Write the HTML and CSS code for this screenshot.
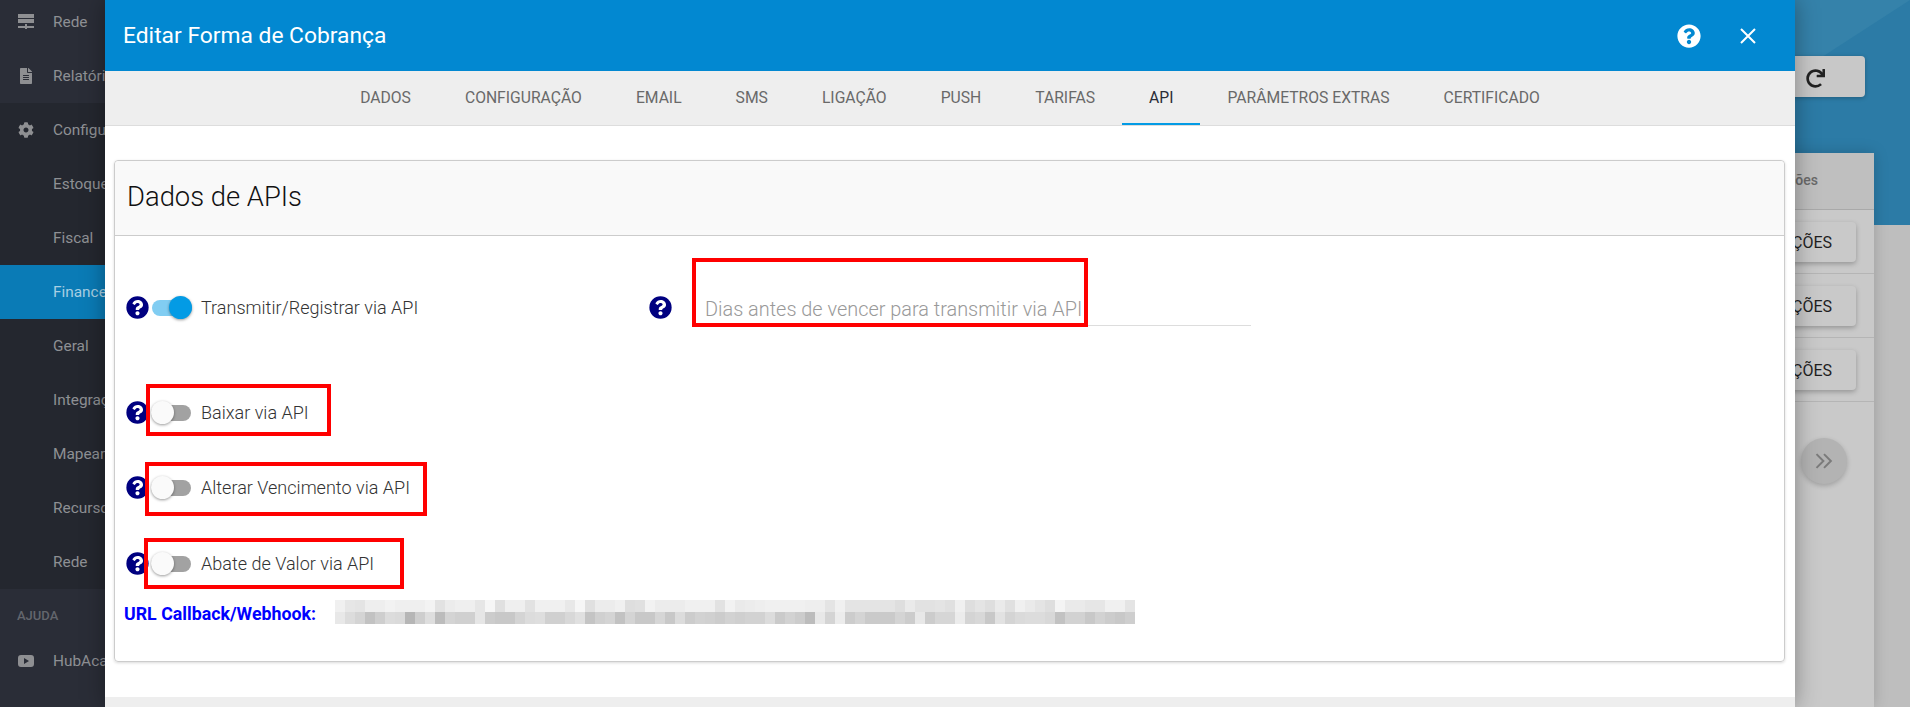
FILE: index.html
```html
<!DOCTYPE html>
<html lang="pt-BR">
<head>
  <meta charset="UTF-8" />
  <title>Editar Forma de Cobrança</title>
  <link rel="stylesheet" href="styles.css">
</head>
<body>
  <div class="app">
    <!-- Menu lateral (fica atras do modal) -->
    <nav class="lateral">
      <div class="grupo-topo">
        <a class="item">
          <svg class="icone" viewBox="0 0 16 16"><path d="M0 0h16v4H0zM0 5h16v4H0zM7 10h2v2h7v2H9v1H7v-1H0v-2h7z"/></svg>
          Rede
        </a>
        <a class="item">
          <svg class="icone" viewBox="0 0 384 512"><path d="M224 136V0H24C10.7 0 0 10.7 0 24v464c0 13.3 10.7 24 24 24h336c13.3 0 24-10.7 24-24V160H248c-13.2 0-24-10.8-24-24zm64 236c0 6.6-5.4 12-12 12H108c-6.6 0-12-5.4-12-12v-8c0-6.6 5.4-12 12-12h168c6.6 0 12 5.4 12 12v8zm0-64c0 6.6-5.4 12-12 12H108c-6.6 0-12-5.4-12-12v-8c0-6.6 5.4-12 12-12h168c6.6 0 12 5.4 12 12v8zm0-72v8c0 6.6-5.4 12-12 12H108c-6.6 0-12-5.4-12-12v-8c0-6.6 5.4-12 12-12h168c6.6 0 12 5.4 12 12zm96-114.1v6.1H256V0h6.1c6.4 0 12.5 2.5 17 7l97.9 98c4.5 4.5 7 10.6 7 16.9z"/></svg>
          Relatórios
        </a>
      </div>
      <a class="item">
        <svg class="icone" viewBox="0 0 512 512"><path d="M487.4 315.7l-42.6-24.6c4.3-23.2 4.3-47 0-70.2l42.6-24.6c4.9-2.8 7.1-8.6 5.5-14-11.1-35.6-30-67.8-54.7-94.6-3.8-4.1-10-5.1-14.8-2.3L380.8 110c-17.9-15.4-38.5-27.3-60.8-35.1V25.8c0-5.6-3.9-10.5-9.4-11.7-36.7-8.2-74.3-7.8-109.2 0-5.5 1.2-9.4 6.1-9.4 11.7V75c-22.2 7.9-42.8 19.8-60.8 35.1L88.7 85.5c-4.9-2.8-11-1.9-14.8 2.3-24.7 26.7-43.6 58.9-54.7 94.6-1.7 5.4.6 11.2 5.5 14L67.3 221c-4.3 23.2-4.3 47 0 70.2l-42.6 24.6c-4.9 2.8-7.1 8.6-5.5 14 11.1 35.6 30 67.8 54.7 94.6 3.8 4.1 10 5.1 14.8 2.3l42.6-24.6c17.9 15.4 38.5 27.3 60.8 35.1v49.2c0 5.6 3.9 10.5 9.4 11.7 36.7 8.2 74.3 7.8 109.2 0 5.5-1.2 9.4-6.1 9.4-11.7v-49.2c22.2-7.9 42.8-19.8 60.8-35.1l42.6 24.6c4.9 2.8 11 1.9 14.8-2.3 24.7-26.7 43.6-58.9 54.7-94.6 1.5-5.5-.7-11.3-5.6-14.1zM256 336c-44.1 0-80-35.9-80-80s35.9-80 80-80 80 35.9 80 80-35.9 80-80 80z"/></svg>
        Configurações
      </a>
      <a class="item sub">Estoque</a>
      <a class="item sub">Fiscal</a>
      <a class="item sub ativo">Financeiro</a>
      <a class="item sub">Geral</a>
      <a class="item sub">Integrações</a>
      <a class="item sub">Mapeamento</a>
      <a class="item sub">Recursos</a>
      <a class="item sub">Rede</a>
      <div class="grupo-ajuda">
        <div class="titulo-ajuda">AJUDA</div>
        <a class="item item-ajuda">
          <svg class="icone" viewBox="0 0 16 16"><path fill-rule="evenodd" d="M3 2h10a3 3 0 0 1 3 3v6a3 3 0 0 1-3 3H3a3 3 0 0 1-3-3V5a3 3 0 0 1 3-3zm3 3v6l5-3z"/></svg>
          HubAcademy
        </a>
      </div>
    </nav>

    <!-- Tela de fundo -->
    <main class="conteudo">
      <div class="barra-acoes">
        <button class="btn-atualizar">
          <svg viewBox="0 0 512 512"><path d="M500.33 0h-47.41a12 12 0 0 0-12 12.57l4 82.76A247.42 247.42 0 0 0 256 8C119.34 8 7.9 119.53 8 256.19 8.1 393.07 119.1 504 256 504a247.1 247.1 0 0 0 166.18-63.91 12 12 0 0 0 .48-17.43l-34-34a12 12 0 0 0-16.38-.55A176 176 0 1 1 402.1 157.8l-101.53-4.87a12 12 0 0 0-12.57 12v47.41a12 12 0 0 0 12 12h200.33a12 12 0 0 0 12-12V12a12 12 0 0 0-12-12z"/></svg>
        </button>
      </div>
      <section class="painel">
        <div class="painel-topo">Opções</div>
        <div class="painel-linha"><button class="btn-opcoes">OPÇÕES</button></div>
        <div class="painel-linha"><button class="btn-opcoes">OPÇÕES</button></div>
        <div class="painel-linha"><button class="btn-opcoes">OPÇÕES</button></div>
        <button class="btn-circulo">
          <svg viewBox="0 0 16 16"><path d="M2 2.5 7.5 8 2 13.5M8 2.5 13.5 8 8 13.5"/></svg>
        </button>
      </section>
    </main>
  </div>

  <!-- Modal -->
  <div class="modal">
    <header class="modal-topo">
      <h1>Editar Forma de Cobrança</h1>
      <svg class="modal-ajuda" viewBox="0 0 512 512"><path d="M504 256c0 136.997-111.043 248-248 248S8 392.997 8 256C8 119.083 119.043 8 256 8s248 111.083 248 248zM262.655 90c-54.497 0-89.255 22.957-116.549 63.758-3.536 5.286-2.353 12.415 2.715 16.258l34.699 26.31c5.205 3.947 12.621 3.008 16.665-2.122 17.864-22.658 30.113-35.797 57.303-35.797 20.429 0 45.698 13.148 45.698 32.958 0 14.976-12.363 22.667-32.534 33.976C247.128 238.528 216 254.941 216 296v4c0 6.627 5.373 12 12 12h56c6.627 0 12-5.373 12-12v-1.333c0-28.462 83.186-29.647 83.186-106.667 0-58.002-60.165-102-116.531-102zM256 338c-25.365 0-46 20.635-46 46 0 25.364 20.635 46 46 46s46-20.636 46-46c0-25.365-20.635-46-46-46z"/></svg>
      <svg class="modal-fechar" viewBox="0 0 16 16"><path d="M1 1l14 14M15 1 1 15"/></svg>
    </header>

    <div class="abas">
      <a class="aba">DADOS</a>
      <a class="aba">CONFIGURAÇÃO</a>
      <a class="aba">EMAIL</a>
      <a class="aba">SMS</a>
      <a class="aba">LIGAÇÃO</a>
      <a class="aba">PUSH</a>
      <a class="aba">TARIFAS</a>
      <a class="aba aba-ativa">API</a>
      <a class="aba">PARÂMETROS EXTRAS</a>
      <a class="aba">CERTIFICADO</a>
    </div>

    <div class="modal-corpo">
      <div class="cartao">
        <h2 class="cartao-topo">Dados de APIs</h2>
        <div class="cartao-corpo">
          <div class="linha linha-primeira">
            <div class="coluna-esq">
              <svg class="ajuda" viewBox="0 0 512 512"><use href="#interrogacao"/></svg>
              <span class="chave ligada"></span>
              <span class="rotulo">Transmitir/Registrar via API</span>
            </div>
            <svg class="ajuda" viewBox="0 0 512 512"><use href="#interrogacao"/></svg>
            <input class="campo" type="text" placeholder="Dias antes de vencer para transmitir via API">
          </div>
          <div class="linha linha-segunda">
            <svg class="ajuda" viewBox="0 0 512 512"><use href="#interrogacao"/></svg>
            <span class="chave"></span>
            <span class="rotulo">Baixar via API</span>
          </div>
          <div class="linha">
            <svg class="ajuda" viewBox="0 0 512 512"><use href="#interrogacao"/></svg>
            <span class="chave"></span>
            <span class="rotulo">Alterar Vencimento via API</span>
          </div>
          <div class="linha linha-abate">
            <svg class="ajuda" viewBox="0 0 512 512"><use href="#interrogacao"/></svg>
            <span class="chave"></span>
            <span class="rotulo">Abate de Valor via API</span>
          </div>
          <div class="linha-url">
            <strong class="url-titulo">URL Callback/Webhook:</strong>
            <div class="borrao" id="borrao"></div>
          </div>
        </div>
      </div>
    </div>
    <div class="modal-rodape"></div>

    <!-- Marcacoes vermelhas do print -->
    <div class="marca marca-campo"></div>
    <div class="marca marca-baixar"></div>
    <div class="marca marca-alterar"></div>
    <div class="marca marca-abate"></div>
  </div>

  <svg class="defs" width="0" height="0">
    <defs>
      <g id="interrogacao">
        <circle cx="256" cy="256" r="248" fill="#000080"/>
        <path fill="#fff" d="M262.655 90c-54.497 0-89.255 22.957-116.549 63.758-3.536 5.286-2.353 12.415 2.715 16.258l34.699 26.31c5.205 3.947 12.621 3.008 16.665-2.122 17.864-22.658 30.113-35.797 57.303-35.797 20.429 0 45.698 13.148 45.698 32.958 0 14.976-12.363 22.667-32.534 33.976C247.128 238.528 216 254.941 216 296v4c0 6.627 5.373 12 12 12h56c6.627 0 12-5.373 12-12v-1.333c0-28.462 83.186-29.647 83.186-106.667 0-58.002-60.165-102-116.531-102zM256 338c-25.365 0-46 20.635-46 46 0 25.364 20.635 46 46 46s46-20.636 46-46c0-25.365-20.635-46-46-46z"/>
      </g>
    </defs>
  </svg>

  <script>
    // Tons da URL borrada no print, coluna por coluna
    const linhaA = 'f0 e6 e4 ee ee f2 ef ef ef f3 e2 ec ef ef e6 f6 e0 ef ef e2 f0 f0 f0 e8 f6 e0 ec ec f0 de e0 f2 ec ec ec f0 f0 f0 e2 f2 ea ec ee f0 f0 f0 f0 ee ee e4 f0 e4 e4 e4 e4 e4 de ea e2 e2 e4 e0 f0 de e4 de ea e0 f0 ea e4 de f4 ea ea e6 e6 f0 f0 e4';
    const linhaB = 'e8 dc d4 c2 ce dc da b6 ce de bc d4 d0 d0 e6 cc c8 c8 d4 dc de d0 d0 d8 e0 c4 d0 d4 c2 d4 c8 c8 d6 c8 dc cc d2 d0 cc d2 cf d2 d2 dc ca d2 cc bc e8 d4 ec cc d4 ca ca ca d4 cc e8 cc d6 d6 ec d4 d8 c8 e2 d4 da dc dc d8 c2 d2 d2 c8 d2 cc c8 ce';
    const borrao = document.getElementById('borrao');
    [linhaA, linhaB].forEach((linha) => {
      linha.split(' ').forEach((tom) => {
        const celula = document.createElement('span');
        celula.style.background = `#${tom}${tom}${tom}`;
        borrao.appendChild(celula);
      });
    });
  </script>
</body>
</html>
```

FILE: styles.css
```css
* {
  box-sizing: border-box;
}

body {
  margin: 0;
  height: 707px;
  overflow: hidden;
  font-family: Roboto, sans-serif;
  background: #bebebe;
}

.defs {
  position: absolute;
}

.app {
  display: flex;
  height: 707px;
}

/* Menu lateral */
.lateral {
  width: 260px;
  flex-shrink: 0;
  margin-top: -5px;
  background: #24272f;
  display: flex;
  flex-direction: column;
}

.grupo-topo {
  background: #2a2d37;
}

.item {
  display: flex;
  align-items: center;
  gap: 19px;
  height: 54px;
  padding-left: 18px;
  font-size: 15.4px;
  color: #8e9094;
  white-space: nowrap;
}

.item.sub {
  padding-left: 53px;
}

.item.ativo {
  background: #0a7bb6;
  color: #a8cfe3;
}

.icone {
  width: 16px;
  height: 16px;
  fill: #8e8f92;
}

.grupo-ajuda {
  flex: 1;
  background: #2a2d37;
}

.titulo-ajuda {
  padding: 19px 0 0 17px;
  font-size: 13px;
  font-weight: 500;
  color: #63666d;
}

.item-ajuda {
  height: 44px;
  margin-top: 16px;
}

/* Tela de fundo */
.conteudo {
  flex: 1;
  position: relative;
  display: flex;
  flex-direction: column;
  align-items: flex-end;
  padding: 56px 36px 0 0;
  background: linear-gradient(#2c7ba6 0 225px, #bebebe 225px);
}

.conteudo::before {
  content: "";
  position: absolute;
  top: 0;
  right: 0;
  width: 400px;
  height: 200px;
  background: #3582aa;
  clip-path: polygon(0 0, 100% 0, 0 259px);
}

.barra-acoes {
  position: relative;
  width: 100%;
  height: 97px;
  display: flex;
  justify-content: flex-end;
}

.btn-atualizar {
  display: flex;
  align-items: center;
  justify-content: flex-end;
  width: 200px;
  height: 41px;
  margin-right: 9px;
  padding: 3px 40px 0 0;
  border: 0;
  border-radius: 4px;
  background: #c8c8c8;
  box-shadow: 0 1px 4px rgba(0, 0, 0, 0.25);
}

.btn-atualizar svg {
  width: 19px;
  height: 19px;
  fill: #222;
}

.painel {
  position: relative;
  width: 400px;
  flex: 1;
  background: #c9c9c9;
  box-shadow: 0 0 14px rgba(0, 0, 0, 0.18);
}

.painel-topo {
  height: 57px;
  padding: 19px 56px 0 0;
  background: #bfbfbf;
  border-bottom: 1px solid #a9a9a9;
  text-align: right;
  font-size: 14px;
  font-weight: 500;
  color: #6a6a6a;
}

.painel-linha {
  height: 64px;
  padding: 12px 18px 0 0;
  border-bottom: 1px solid #b5b5b5;
  text-align: right;
}

.btn-opcoes {
  width: 140px;
  height: 40px;
  padding: 0 24px 0 0;
  border: 0;
  border-radius: 4px;
  background: #c9c9c9;
  box-shadow: 0 2px 5px rgba(0, 0, 0, 0.25);
  text-align: right;
  font-family: Roboto, sans-serif;
  font-size: 16px;
  font-weight: 400;
  color: #1f1f1f;
}

.btn-circulo {
  display: block;
  width: 46px;
  height: 46px;
  margin: 36px 27px 0 auto;
  padding: 0;
  border: 0;
  border-radius: 50%;
  background: #b3b3b3;
  box-shadow: 0 2px 5px rgba(0, 0, 0, 0.2);
}

.btn-circulo svg {
  display: block;
  width: 20px;
  height: 20px;
  margin: auto;
  fill: none;
  stroke: #7b7b7b;
  stroke-width: 1.6;
}

/* Modal */
.modal {
  position: absolute;
  top: 0;
  left: 105px;
  width: 1690px;
  height: 707px;
  display: flex;
  flex-direction: column;
  background: #fff;
  box-shadow: 0 0 22px rgba(0, 0, 0, 0.35);
}

.modal-topo {
  height: 71px;
  flex-shrink: 0;
  display: flex;
  align-items: center;
  padding: 0 39px 0 18px;
  background: #0288d1;
  color: #fff;
}

.modal-topo h1 {
  flex: 1;
  margin: 0;
  font-size: 22.8px;
  font-weight: 400;
}

.modal-ajuda {
  width: 24px;
  height: 24px;
  margin-right: 39px;
  fill: #fff;
}

.modal-fechar {
  width: 16px;
  height: 16px;
  fill: none;
  stroke: #fff;
  stroke-width: 2;
}

.abas {
  height: 55px;
  flex-shrink: 0;
  display: flex;
  justify-content: center;
  background: #eee;
  border-bottom: 1px solid #ddd;
}

.aba {
  padding: 0 27px;
  line-height: 54px;
  font-size: 15.7px;
  font-weight: 400;
  color: #696969;
  white-space: nowrap;
}

.aba-ativa {
  color: #2a2d37;
  box-shadow: inset 0 -2px 0 #039be5;
}

.modal-corpo {
  flex: 1;
  padding: 34px 10px 35px 9px;
}

.modal-rodape {
  height: 10px;
  background: #eee;
}

.cartao {
  height: 502px;
  border: 1px solid #ccc;
  border-radius: 4px;
  box-shadow: 0 1px 3px rgba(0, 0, 0, 0.15);
}

.cartao-topo {
  height: 75px;
  margin: 0;
  padding: 0 0 0 12px;
  background: #f9f9f9;
  border-bottom: 1px solid #ccc;
  border-radius: 4px 4px 0 0;
  font-size: 27.4px;
  font-weight: 300;
  line-height: 73px;
  color: #111;
}

.cartao-corpo {
  padding: 46px 10px 0 11px;
}

.linha,
.coluna-esq {
  display: flex;
  align-items: center;
}

.linha {
  height: 50px;
  margin-top: 25px;
}

.linha-primeira {
  margin-top: 0;
}

.linha-segunda {
  margin-top: 55px;
}

.linha-abate {
  margin-top: 26px;
}

.coluna-esq {
  width: 523px;
}

.ajuda {
  width: 23px;
  height: 23px;
  flex-shrink: 0;
}

.chave {
  position: relative;
  width: 40px;
  height: 16px;
  margin: 2px 10px 0 2px;
  border-radius: 8px;
  background: #a2a2a2;
}

.chave::after {
  content: "";
  position: absolute;
  top: -4px;
  left: 0;
  width: 23px;
  height: 23px;
  border-radius: 50%;
  background: #fafafa;
  box-shadow: 0 1px 3px rgba(0, 0, 0, 0.4);
}

.chave.ligada {
  margin: 2px 9px 0 3px;
  background: #81cdf2;
}

.chave.ligada::after {
  left: auto;
  right: 0;
  background: #039be5;
}

.rotulo {
  font-size: 18.05px;
  font-weight: 300;
  color: #333;
}

.campo {
  width: 559px;
  height: 38px;
  padding: 5px 13px 0;
  margin-left: 20px;
  border: 0;
  border-bottom: 1px solid #ddd;
  outline: 0;
  background: transparent;
  font-family: Roboto, sans-serif;
  font-size: 19.9px;
  font-weight: 300;
}

.campo::placeholder {
  color: #999;
}

.linha-url {
  display: flex;
  align-items: center;
  margin-top: 12px;
  margin-left: -2px;
}

.url-titulo {
  width: 211px;
  padding-top: 2px;
  font-size: 17.8px;
  color: #0000ff;
}

.borrao {
  display: grid;
  grid-template-columns: repeat(80, 10px);
  grid-auto-rows: 12px;
}

/* Marcacoes vermelhas */
.marca {
  position: absolute;
  border: 4px solid #f00;
}

.marca-campo {
  top: 258px;
  left: 587px;
  width: 396px;
  height: 69px;
}

.marca-baixar {
  top: 384px;
  left: 41px;
  width: 185px;
  height: 52px;
}

.marca-alterar {
  top: 462px;
  left: 40px;
  width: 282px;
  height: 54px;
}

.marca-abate {
  top: 538px;
  left: 39px;
  width: 260px;
  height: 51px;
}
```
